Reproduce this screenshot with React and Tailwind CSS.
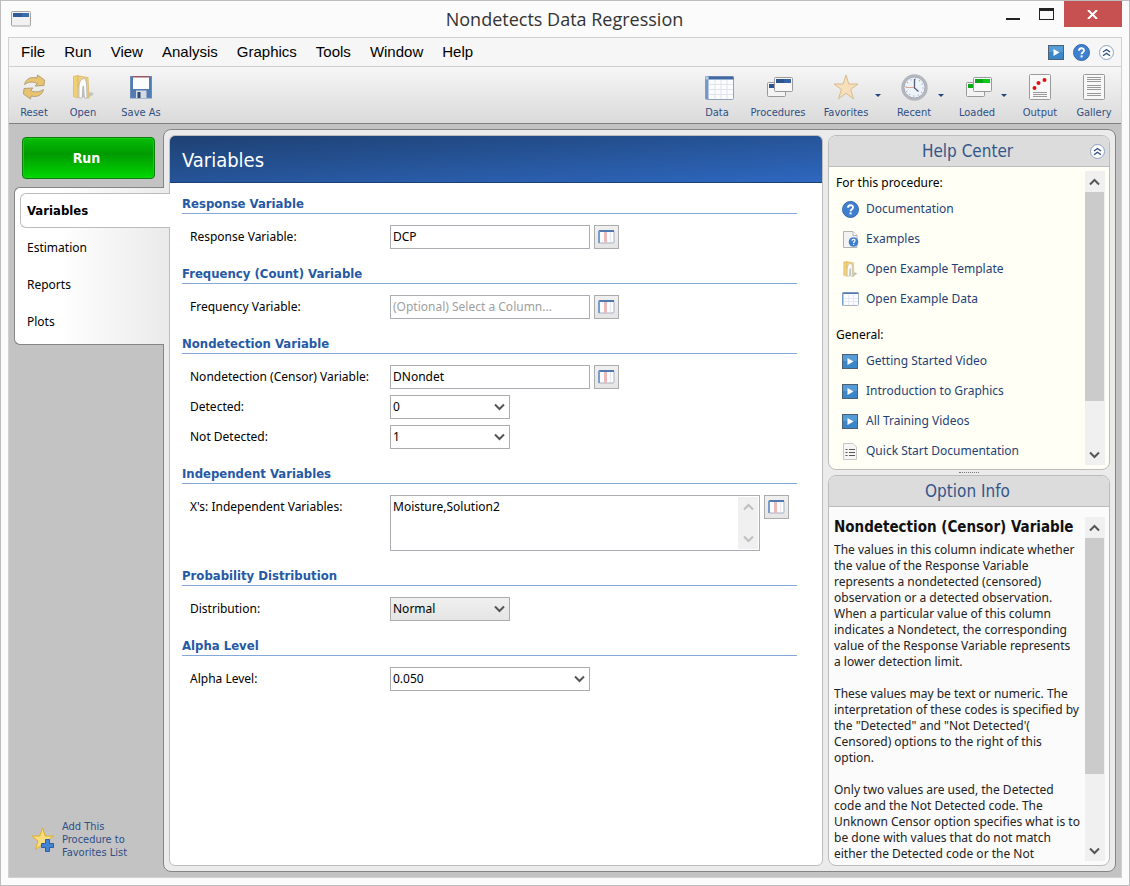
import { useState } from "react"

// icons
const WindowIcon = () => (
    <svg width="20" height="16" viewBox="0 0 20 16">
        <rect x="0.5" y="0.5" width="19" height="14.5" rx="1" fill="#f1f1f1" stroke="#a3a3a3" />
        <path d="M2 2H18V6H2Z" fill="#2f5a97" />
        <path d="M11 2H18V6H11Z" fill="#396aab" />
    </svg>
);

const ResetIcon = () => (
    <svg width="24" height="26" viewBox="0 0 24 26" fill="#e9c46e" stroke="#b3a07a" strokeWidth="1" strokeLinejoin="round">
        <path d="M2.5 10.500 C4 4.500 9 2.500 15 4 L15.500 1 L22.500 6 L22 11.500 L13 12 L15.500 9.500 C11 7.500 7 7.500 2.500 10.500 Z" />
        <path d="M21.500 15.500 C20 21.500 15 23.500 9 22 L8.500 25 L1.500 20 L2 14.500 L11 14 L8.500 16.500 C13 18.500 17 18.500 21.500 15.500 Z" />
    </svg>
);

const FolderIcon = ({ size = 24 }) => (
    <svg width={size} height={size} viewBox="0 0 24 24">
        <path d="M17 23 L23 19 L20 17 L17 18 Z" fill="#c4c4c4" />
        <path d="M2.500 1.500 L7 0.500 L7 23 L2.500 21.500 Z" fill="#f1cf74" stroke="#d9b45c" strokeWidth="0.7" />
        <path d="M7 0.800 L17 2.500 L18 23 L15.500 23 L14 6 L7 12 Z" fill="#efd07e" stroke="#d9b45c" strokeWidth="0.7" />
        <path d="M8 23 L8 11 C8.500 6 10.500 3.500 14 3.500 L15.500 8 L16 23 L13.500 23 L12.500 11 L11 23 Z" fill="#fbfbfb" stroke="#a9a9a9" strokeWidth="0.7" />
        <path d="M11 22 L11.500 12 L12.500 10 L13 22 Z" fill="#b9b9b9" />
    </svg>
);

const SaveIcon = () => (
    <svg width="22" height="23" viewBox="0 0 22 23">
        <rect x="0.500" y="0.500" width="21" height="21.500" fill="#4f7db3" stroke="#6c8bb3" />
        <rect x="3" y="0" width="16" height="13" fill="#fcfcfd" />
        <rect x="2.500" y="0" width="17" height="1.500" fill="#9c5468" />
        <rect x="6" y="14.500" width="10.500" height="7.500" fill="#d7dadf" />
        <rect x="7.500" y="16" width="3" height="6" fill="#2b4a78" />
    </svg>
);

const SheetIcon = () => (
    <svg width="33" height="25" viewBox="-4 0 33 25">
        <rect x="0.500" y="1.500" width="28" height="23" rx="1" fill="#fbfcff" stroke="#93a2bb" />
        <rect x="0.500" y="1.500" width="28" height="3" fill="#3f68a4" />
        <rect x="0.500" y="2" width="3" height="22" fill="#7397c8" />
        <rect x="0.500" y="1.500" width="3" height="3" fill="#b9cde8" />
        <path d="M10 5V24M16 5V24M22 5V24M4 9.500H28M4 14.500H28M4 19.500H28" stroke="#e0e3ec" strokeWidth="1" />
    </svg>
);

const SmallSheetIcon = () => (
    <svg width="17" height="14" viewBox="0 0 17 14">
        <rect x="0.500" y="0.500" width="16" height="13" rx="1" fill="#fbfcff" stroke="#a9b3c5" />
        <rect x="0.500" y="0.500" width="16" height="1.500" fill="#5079b0" />
        <rect x="0" y="1" width="1.500" height="12.500" fill="#7c9dca" />
        <path d="M6.500 3V13M11.500 3V13M2 6.500H16M2 9.500H16" stroke="#e6e9f0" />
    </svg>
);

const StackIcon = ({ color, shade }) => (
    <svg width="30" height="22" viewBox="-4 -1 30 22">
        <rect x="0.500" y="5.500" width="18" height="14" rx="1" fill="#f3f3f3" stroke="#9a9a9a" />
        <rect x="2" y="7" width="7" height="4" fill={color} />
        <rect x="7.500" y="0.500" width="18" height="14" rx="1" fill="#f8f8f8" stroke="#9a9a9a" />
        <rect x="9" y="2" width="15" height="4" fill={color} />
        <rect x="17" y="2" width="7" height="4" fill={shade} />
    </svg>
);

const StarIcon = () => (
    <svg width="26" height="26" viewBox="0 0 26 26">
        <path d="M13 1 L15.800 10 L25 10 L17.600 15.500 L20.500 24.800 L13 19.200 L5.500 24.800 L8.400 15.500 L1 10 L10.200 10 Z" fill="#f6dfb9" stroke="#d6bc90" />
    </svg>
);

const ClockIcon = () => (
    <svg width="27" height="27" viewBox="0 0 27 27">
        <circle cx="13.5" cy="13.5" r="12" fill="#eef2f9" stroke="#b4b6bb" strokeWidth="2.500" />
        <circle cx="13.5" cy="13.5" r="10.500" fill="none" stroke="#8d96a8" strokeWidth="0.800" />
        <circle cx="13.5" cy="13.5" r="8.500" fill="none" stroke="#a5adbb" strokeWidth="1.500" strokeDasharray="1 3.450" />
        <path d="M5 13.500H13" stroke="#e2a58b" strokeWidth="1" />
        <path d="M13.500 5V14L17.500 17.500" fill="none" stroke="#54617a" strokeWidth="1.300" />
    </svg>
);

const OutputIcon = () => (
    <svg width="22" height="26" viewBox="0 0 22 26">
        <rect x="0.500" y="0.500" width="21" height="25" rx="1" fill="#f8f8f8" stroke="#9a9a9a" />
        <circle cx="5.500" cy="14" r="2" fill="#dd1111" />
        <circle cx="9.500" cy="9" r="2" fill="#dd1111" />
        <circle cx="15.500" cy="6" r="2" fill="#dd1111" />
        <path d="M4 18.500H18M4 20.500H18M4 22.500H18" stroke="#999" />
    </svg>
);

const GalleryIcon = () => (
    <svg width="22" height="26" viewBox="0 0 22 26">
        <rect x="0.500" y="0.500" width="21" height="25" rx="1" fill="#f8f8f8" stroke="#9a9a9a" />
        <path d="M4 3.500H18M4 5.500H18M4 7.500H18M4 11.500H18M4 13.500H18M4 15.500H18M4 19.500H18M4 21.500H18" stroke="#999" />
    </svg>
);

const VideoIcon = () => (
    <svg width="16" height="15" viewBox="0 0 16 15">
        <rect x="0.500" y="0.500" width="15" height="14" fill="#3a86c8" stroke="#4d6072" />
        <rect x="1" y="1" width="14" height="6" fill="#559bd5" />
        <path d="M5.500 4 L11.500 7.500 L5.500 11 Z" fill="#fff" />
    </svg>
);

const HelpIcon = () => (
    <svg width="17" height="17" viewBox="0 0 17 17">
        <circle cx="8.5" cy="8.5" r="8" fill="#3f7fd0" stroke="#3468ad" />
        <path d="M6 6.700 C6 3.500 11 3.500 11 6.400 C11 8.200 8.600 8.300 8.600 10.300" fill="none" stroke="#fff" strokeWidth="1.900" />
        <rect x="7.600" y="11.400" width="2" height="2" fill="#fff" />
    </svg>
);

const ExamplesIcon = () => (
    <svg width="17" height="17" viewBox="-1 0 17 17">
        <path d="M0.500 0.500H10L14 4.500V16.500H0.500Z" fill="#f3f3f3" stroke="#b3b3b3" />
        <path d="M10 0.500V4.500H14" fill="#fff" stroke="#b3b3b3" />
        <circle cx="10.500" cy="11" r="4.800" fill="#3f7fd0" />
        <path d="M9 9.800 C9 7.800 12 7.800 12 9.600 C12 10.800 10.600 10.800 10.600 12" fill="none" stroke="#fff" strokeWidth="1.200" />
        <rect x="10" y="12.800" width="1.200" height="1.200" fill="#fff" />
    </svg>
);

const ListIcon = () => (
    <svg width="15" height="17" viewBox="-1 0 15 17">
        <path d="M0.500 0.500H10L13.500 4V16.500H0.500Z" fill="#f6f6f6" stroke="#c6c6c6" />
        <path d="M2.500 6.500H4.500M2.500 9.500H4.500M2.500 12.500H4.500M6 6.500H12M6 9.500H12M6 12.500H12" stroke="#555" />
    </svg>
);

const CollapseIcon = () => (
    <svg width="15" height="15" viewBox="0 0 15 15" fill="none">
        <circle cx="7.5" cy="7.5" r="7" fill="#fff" stroke="#8ea0bf" />
        <path d="M4 7 L7.500 4.500 L11 7 M4 10.800 L7.500 8.300 L11 10.800" stroke="#2f4f86" strokeWidth="1.400" />
    </svg>
);

const ColumnIcon = () => (
    <svg width="17" height="14" viewBox="0 0 17 14">
        <rect x="0.500" y="0.500" width="15.500" height="12.500" rx="1" fill="#fbfcfe" stroke="#a6b0c2" />
        <rect x="1" y="0" width="15" height="2" fill="#5079b0" />
        <rect x="0" y="1" width="2" height="12" fill="#7c9dca" />
        <rect x="6" y="2" width="3" height="11" fill="#eab9b9" />
        <path d="M12.500 2V12" stroke="#e6e9f0" />
    </svg>
);

const AddFavoriteIcon = () => (
    <svg width="24" height="25" viewBox="0 0 24 25">
        <path d="M11.500 1 L14.200 9 L22.500 9 L16 14 L18.500 22.500 L11.500 17.500 L4.500 22.500 L7 14 L0.800 9 L8.800 9 Z" fill="#f8dc7d" stroke="#dfb02f" />
        <path d="M14.500 12.500H18.500V16.500H22.500V20.500H18.500V24.500H14.500V20.500H10.500V16.500H14.500Z" fill="#4383d6" stroke="#2d5ea3" />
    </svg>
);

const Chevron = ({ up, color = "#555" }) => (
    <svg width="11" height="8" viewBox="0 0 11 8" fill="none" stroke={color} strokeWidth="2">
        <path d={up ? "M1 6.500 L5.500 2 L10 6.500" : "M1 1.500 L5.500 6 L10 1.500"} />
    </svg>
);

// data
const menus = ["File", "Run", "View", "Analysis", "Graphics", "Tools", "Window", "Help"];
const tabs = ["Variables", "Estimation", "Reports", "Plots"];

const fileTools = [
    { label: "Reset", icon: <ResetIcon />, width: "w-10" },
    { label: "Open", icon: <FolderIcon />, width: "w-10" },
    { label: "Save As", icon: <SaveIcon />, width: "w-[58px]" },
];

const windowTools = [
    { label: "Data", icon: <SheetIcon />, width: "w-9" },
    { label: "Procedures", icon: <StackIcon color="#2a5390" shade="#3563a3" />, width: "w-[68px]" },
    { label: "Favorites", icon: <StarIcon />, width: "w-[50px]", menu: true },
    { label: "Recent", icon: <ClockIcon />, width: "w-10", menu: true },
    { label: "Loaded", icon: <StackIcon color="#0aa814" shade="#0ccb18" />, width: "w-10", menu: true },
    { label: "Output", icon: <OutputIcon />, width: "w-10" },
    { label: "Gallery", icon: <GalleryIcon />, width: "w-[50px]" },
];

const procedureLinks = [
    { label: "Documentation", icon: <HelpIcon /> },
    { label: "Examples", icon: <ExamplesIcon /> },
    { label: "Open Example Template", icon: <FolderIcon size={16} /> },
    { label: "Open Example Data", icon: <SmallSheetIcon /> },
];

const generalLinks = [
    { label: "Getting Started Video", icon: <VideoIcon /> },
    { label: "Introduction to Graphics", icon: <VideoIcon /> },
    { label: "All Training Videos", icon: <VideoIcon /> },
    { label: "Quick Start Documentation", icon: <ListIcon /> },
];

// help texts are stored with their line breaks
const optionInfo = [
    `The values in this column indicate whether
the value of the Response Variable
represents a nondetected (censored)
observation or a detected observation.
When a particular value of this column
indicates a Nondetect, the corresponding
value of the Response Variable represents
a lower detection limit.`,
    `These values may be text or numeric. The
interpretation of these codes is specified by
the "Detected" and "Not Detected'(
Censored) options to the right of this
option.`,
    `Only two values are used, the Detected
code and the Not Detected code. The
Unknown Censor option specifies what is to
be done with values that do not match
either the Detected code or the Not`,
];

// shared pieces
const ToolButton = ({ label, icon, width, menu }) => (
    <div className="flex">
        <button className={`flex flex-col items-center ${width}`}>
            <span className="mb-0.5 flex h-8 items-center">{icon}</span>
            <span className="text-[11px] leading-4 whitespace-nowrap text-[#2f4f86]">{label}</span>
        </button>
        {menu && (
            <button aria-label={`${label} menu`} className="flex w-3.5 items-center justify-center pb-1">
                <svg width="6" height="3" viewBox="0 0 6 3"><path d="M0 0H6L3 3Z" fill="#23457d" /></svg>
            </button>
        )}
    </div>
);

const ScrollBar = ({ thumb }) => (
    <div className="flex w-5 shrink-0 flex-col bg-[#f0f0f0] pr-px">
        <div className="flex h-[21px] shrink-0 items-center justify-center"><Chevron up /></div>
        <div className="min-h-0 flex-1">
            <div className={`bg-[#cbcbcb] ${thumb}`}></div>
        </div>
        <div className="flex h-[21px] shrink-0 items-center justify-center"><Chevron /></div>
    </div>
);

const Section = ({ title, children }) => (
    <section className="mb-[17px]">
        <h2 className="border-b border-[#86a8d8] pb-0.5 text-[13px] leading-[15px] font-bold text-[#2559a5]">{title}</h2>
        <div className="mt-[11px] flex flex-col gap-1.5 pl-2">{children}</div>
    </section>
);

const Field = ({ id, label, children }) => (
    <div className="flex items-start font-['Noto_Sans',sans-serif]">
        <label htmlFor={id} className="w-[200px] shrink-0 text-xs leading-6">{label}</label>
        {children}
    </div>
);

const ColumnButton = () => (
    <button aria-label="Select column" className="ml-1 flex h-6 w-[25px] shrink-0 items-center justify-center border border-[#acacac] bg-linear-to-b from-[#f0f0f0] to-[#e5e5e5]">
        <ColumnIcon />
    </button>
);

const TextField = ({ id, label, value, placeholder }) => (
    <Field id={id} label={label}>
        <input
            id={id}
            type="text"
            defaultValue={value}
            placeholder={placeholder}
            className="h-6 w-[200px] border border-[#abadb3] bg-white px-0.5 pb-0.5 text-xs placeholder:text-[#a0a0a0]"
        />
        <ColumnButton />
    </Field>
);

const SelectField = ({ id, label, options, box }) => (
    <Field id={id} label={label}>
        <div className="relative">
            <select id={id} className={`block h-6 appearance-none border border-[#acacac] px-0.5 text-xs ${box}`}>
                {options.map((o) => <option key={o}>{o}</option>)}
            </select>
            <span className="pointer-events-none absolute inset-y-0 right-[5px] flex items-center"><Chevron /></span>
        </div>
    </Field>
);

const LinkRow = ({ label, icon }) => (
    <li>
        <a href="#" className="flex h-[30px] items-center pl-1 text-xs text-[#1f3f77]">
            <span className="flex w-6 shrink-0">{icon}</span>
            {label}
        </a>
    </li>
);

const PanelHeader = ({ title, children }) => (
    <div className="flex h-[31px] shrink-0 items-center border-b border-[#bcbcbc] bg-[#dcdcdc] pr-1 pl-4">
        <h2 className="flex-1 pt-0.5 text-center text-[17px] text-[#34568b]">{title}</h2>
        <div className="w-[15px]">{children}</div>
    </div>
);

const App = () => {
    const [ activeTab, setActiveTab ] = useState("Variables");

    return (
        <div className="flex h-screen flex-col border border-[#bdbdbd] bg-[#fbfbfb] px-[7px] pb-[7px] font-['DejaVu_Sans_Condensed','Noto_Sans',sans-serif] text-black">
            {/* title bar */}
            <header className="flex h-9 shrink-0 items-start">
                <div className="flex h-9 w-[124px] items-center pl-[3px]"><WindowIcon /></div>
                <h1 className="flex-1 text-center font-['Open_Sans',sans-serif] text-lg leading-9 text-[#333]">Nondetects Data Regression</h1>
                <button aria-label="Minimize" className="flex h-[26px] w-8 items-center justify-center">
                    <span className="mt-2.5 h-0.5 w-3.5 bg-[#222]"></span>
                </button>
                <button aria-label="Maximize" className="flex h-[26px] w-[35px] items-center justify-center">
                    <span className="h-3 w-[15px] border border-t-3 border-[#222]"></span>
                </button>
                <button aria-label="Close" className="flex h-[26px] w-[58px] items-center justify-center bg-[#c75050] pr-0.5">
                    <svg width="11" height="9" viewBox="0 0 11 9" stroke="#fff" strokeWidth="2"><path d="M1 0L10 9M10 0L1 9" /></svg>
                </button>
            </header>

            <div className="flex min-h-0 flex-1 flex-col border border-[#d0d0d0] bg-[#c3c3c3]">
                {/* menu */}
                <nav className="flex h-[29px] shrink-0 items-center border-b border-[#cfcfcf] bg-[#f6f6f6] pr-[7px] pl-3 font-['Liberation_Sans',sans-serif] text-[15px]">
                    <div className="flex flex-1 gap-[19px]">
                        {menus.map((m) => <button key={m}>{m}</button>)}
                    </div>
                    <div className="flex items-center gap-[9px]">
                        <button aria-label="Training video"><VideoIcon /></button>
                        <button aria-label="Help"><HelpIcon /></button>
                        <button aria-label="Collapse toolbar"><CollapseIcon /></button>
                    </div>
                </nav>

                {/* toolbar */}
                <div className="flex h-[57px] shrink-0 justify-between border-b border-[#808080] bg-linear-to-b from-[#f6f6f6] to-[#dadada] pt-1 pr-0.5 pl-[5px]">
                    <div className="flex gap-[9px]">
                        {fileTools.map((t) => <ToolButton key={t.label} {...t} />)}
                    </div>
                    <div className="flex gap-[9px]">
                        {windowTools.map((t) => <ToolButton key={t.label} {...t} />)}
                    </div>
                </div>

                <div className="flex min-h-0 flex-1 pt-[5px] pr-[5px] pb-[5px]">
                    {/* sidebar */}
                    <aside className="relative z-10 flex w-[154px] shrink-0 flex-col">
                        <button className="mt-2 mr-2 ml-[13px] h-[42px] rounded-sm border border-[#0a7d0a] bg-linear-to-b from-[#06bf06] via-[#009a00] via-40% to-[#00d800] pr-1 text-sm font-bold text-white shadow-[inset_0_0_0_1px_#14cf14]">
                            Run
                        </button>
                        <div className="mt-2 -mr-px ml-[5px] flex flex-col rounded-l-md border border-r-0 border-[#858585] bg-linear-to-r from-white from-30% to-[#ebebeb] py-[5px] pl-[5px] font-['Noto_Sans',sans-serif]">
                            {tabs.map((t) => (
                                <button
                                    key={t}
                                    onClick={() => setActiveTab(t)}
                                    className={
                                        t === activeTab
                                            ? "-mr-1.5 h-[35px] rounded-l-md border border-r-0 border-[#bcbcbc] bg-white pl-1.5 text-left font-['DejaVu_Sans_Condensed',sans-serif] text-[13px] font-bold"
                                            : "h-[37px] border-l border-transparent pt-0.5 pl-1.5 text-left text-xs"
                                    }
                                >
                                    {t}
                                </button>
                            ))}
                        </div>
                        <button className="mt-auto mb-[13px] ml-[22px] flex items-center gap-[7px] text-left text-[11px] leading-[13px] text-[#2f4f86]">
                            <AddFavoriteIcon />
                            <span>Add This<br />Procedure to<br />Favorites List</span>
                        </button>
                    </aside>

                    <div className="flex min-w-0 flex-1 gap-[5px] rounded-lg border border-[#858585] bg-[#ebebeb] p-[5px]">
                        {/* options */}
                        <main className="flex min-w-0 flex-1 flex-col overflow-hidden rounded-md border border-[#bcbcbc] bg-white">
                            <h1 className="h-[47px] shrink-0 border-b border-[#1c3f78] bg-linear-to-br from-[#1e4173] to-[#2e68c0] pl-3 text-xl leading-[48px] text-white">{activeTab}</h1>
                            <div className="pt-[13px] pr-[25px] pl-3">
                                <Section title="Response Variable">
                                    <TextField id="response" label="Response Variable:" value="DCP" />
                                </Section>
                                <Section title="Frequency (Count) Variable">
                                    <TextField id="frequency" label="Frequency Variable:" placeholder="(Optional) Select a Column..." />
                                </Section>
                                <Section title="Nondetection Variable">
                                    <TextField id="censor" label="Nondetection (Censor) Variable:" value="DNondet" />
                                    <SelectField id="detected" label="Detected:" options={["0", "1"]} box="w-[120px] bg-white" />
                                    <SelectField id="notDetected" label="Not Detected:" options={["1", "0"]} box="w-[120px] bg-white" />
                                </Section>
                                <Section title="Independent Variables">
                                    <Field id="xs" label="X's: Independent Variables:">
                                        <div className="flex h-14 w-[370px] border border-[#abadb3] p-px">
                                            <textarea id="xs" defaultValue="Moisture,Solution2" className="min-w-0 flex-1 resize-none px-px py-0.5 text-xs" />
                                            <div className="flex w-5 shrink-0 flex-col items-center justify-between bg-[#f0f0f0] py-1.5">
                                                <Chevron up color="#bfbfbf" />
                                                <Chevron color="#bfbfbf" />
                                            </div>
                                        </div>
                                        <ColumnButton />
                                    </Field>
                                </Section>
                                <Section title="Probability Distribution">
                                    <SelectField id="distribution" label="Distribution:" options={["Normal"]} box="w-[120px] bg-linear-to-b from-[#f0f0f0] to-[#e5e5e5]" />
                                </Section>
                                <Section title="Alpha Level">
                                    <SelectField id="alpha" label="Alpha Level:" options={["0.050"]} box="w-[200px] bg-white" />
                                </Section>
                            </div>
                        </main>

                        {/* help column */}
                        <aside className="flex w-[282px] shrink-0 flex-col">
                            <section className="flex min-h-0 flex-6 flex-col overflow-hidden rounded-lg border border-[#bcbcbc] bg-[#fffff5]">
                                <PanelHeader title="Help Center">
                                    <button aria-label="Collapse help" className="block"><CollapseIcon /></button>
                                </PanelHeader>
                                <div className="flex min-h-0 flex-1 p-1">
                                    <div className="min-w-0 flex-1 overflow-hidden pl-[3px] font-['Noto_Sans',sans-serif] text-xs">
                                        <p className="pt-1 leading-4">For this procedure:</p>
                                        <ul className="pt-[3px] pl-0.5">
                                            {procedureLinks.map((l) => <LinkRow key={l.label} {...l} />)}
                                        </ul>
                                        <p className="pt-[13px] leading-4">General:</p>
                                        <ul className="pt-[3px] pl-0.5">
                                            {generalLinks.map((l) => <LinkRow key={l.label} {...l} />)}
                                        </ul>
                                    </div>
                                    <ScrollBar thumb="h-[83%]" />
                                </div>
                            </section>
                            <div className="flex h-[5px] shrink-0 items-center justify-center">
                                <div className="w-5 border-t border-dotted border-[#777]"></div>
                            </div>
                            <section className="flex min-h-0 flex-7 flex-col overflow-hidden rounded-lg border border-[#bcbcbc] bg-[#fbfbfb]">
                                <PanelHeader title="Option Info" />
                                <div className="flex min-h-0 flex-1 pt-[10px] pr-1 pb-1 pl-[5px]">
                                    <div className="min-w-0 flex-1 overflow-hidden font-['Noto_Sans',sans-serif] text-xs leading-4 text-[#222]">
                                        <h3 className="mb-[5px] font-['DejaVu_Sans_Condensed',sans-serif] text-[15px] leading-5 font-bold whitespace-nowrap text-[#111]">Nondetection (Censor) Variable</h3>
                                        {optionInfo.map((text, i) => <p key={i} className="mb-4 whitespace-pre-line">{text}</p>)}
                                    </div>
                                    <ScrollBar thumb="h-[78%]" />
                                </div>
                            </section>
                        </aside>
                    </div>
                </div>
            </div>
        </div>
    );
};

export default App;
